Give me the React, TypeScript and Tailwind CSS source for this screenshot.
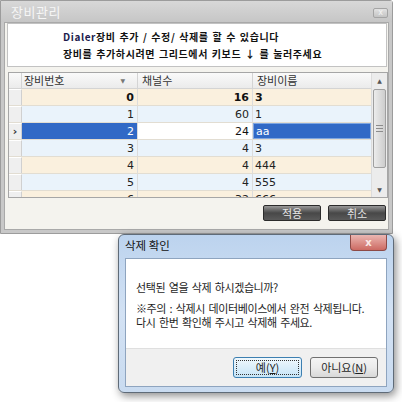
import React from "react";

type Row = { a: string; b: string; c: string; bold?: boolean; sel?: boolean };

const rows: Row[] = [
  { a: "0", b: "16", c: "3", bold: true },
  { a: "1", b: "60", c: "1" },
  { a: "2", b: "24", c: "aa", sel: true },
  { a: "3", b: "4", c: "3" },
  { a: "4", b: "4", c: "444" },
  { a: "5", b: "4", c: "555" },
  { a: "6", b: "32", c: "666" },
];

function DarkButton({ label }: { label: string }) {
  return (
    <div className="w-[58px] h-[16px] flex items-center justify-center rounded-[2px] border border-[#2b2b2b] bg-gradient-to-b from-[#9a9a9a] via-[#484848] to-[#5a5a5a] text-[11px] leading-none text-[#e6e6e6] font-['Noto_Sans_CJK_KR',sans-serif]">
      {label}
    </div>
  );
}

function MainWindow() {
  return (
    <div className="absolute left-0 top-0 w-[393px] h-[234px] flex flex-col border border-[#9c9c9c] bg-[#c8c8c8] rounded-tr-[3px]">
      {/* title bar */}
      <div className="h-[21px] flex items-center justify-between pl-[10px] pr-[4px] bg-gradient-to-b from-[#d8d8d8] to-[#c6c6c6]">
        <span className="text-[13px] leading-none text-[#f6f6f6] font-['Noto_Sans_CJK_KR',sans-serif] tracking-[0.5px]">
          장비관리
        </span>
        <div className="w-[15px] h-[10px] mt-[3px] flex items-center justify-center rounded-[2px] border border-[#a4a4a4] bg-gradient-to-b from-[#e2e2e2] to-[#c4c4c4] text-[8px] leading-none text-[#f4f4f4] font-['DejaVu_Sans',sans-serif]">
          x
        </div>
      </div>
      {/* content */}
      <div className="flex-1 mx-[3px] mb-[3px] bg-[#f4f3ee] border border-[#a9a9a9] flex flex-col">
        {/* header panel */}
        <div className="ml-[2px] mr-[1px] h-[44px] bg-white border border-[#c2c2c2] flex flex-col justify-center gap-[4px] pl-[55px] font-['Noto_Sans_CJK_KR',sans-serif] font-bold text-[10px] leading-[13px] tracking-[0.6px] [word-spacing:1px] text-[#111]">
          <div>
            <span className="text-[#1b1b4d]">Dialer</span>장비 추가 / 수정/ 삭제를 할 수 있습니다
          </div>
          <div>장비를 추가하시려면 그리드에서 키보드 ↓ 를 눌러주세요</div>
        </div>
        {/* grid */}
        <div className="mt-[5px] ml-[3px] h-[126px] border border-[#a6a6a6] bg-white flex font-['DejaVu_Sans','Noto_Sans_CJK_KR',sans-serif] text-[11px] leading-none">
          <div className="flex-1 flex flex-col overflow-hidden">
            <div className="h-[16px] shrink-0 flex border-b border-[#d4d4d4] bg-gradient-to-b from-[#fafafa] to-[#ebebeb] text-[#333]">
              <div className="w-[13px] border-r border-[#d4d4d4]" />
              <div className="w-[116px] border-r border-[#d4d4d4] flex items-center justify-between pl-[2px] pr-[12px]">
                <span className="font-['Noto_Sans_CJK_KR',sans-serif] text-[11px]">장비번호</span>
                <span className="text-[6px] text-[#777]">▼</span>
              </div>
              <div className="w-[115px] border-r border-[#d4d4d4] flex items-center pl-[4px]">
                <span className="font-['Noto_Sans_CJK_KR',sans-serif] text-[11px]">채널수</span>
              </div>
              <div className="flex-1 flex items-center pl-[4px]">
                <span className="font-['Noto_Sans_CJK_KR',sans-serif] text-[11px]">장비이름</span>
              </div>
            </div>
            {rows.map((r, i) => {
              const bg = i % 2 === 0 ? "bg-[#faf0de]" : "bg-[#eaf3fb]";
              const weight = r.bold ? "font-bold text-[#111]" : "text-[#222]";
              return (
                <div key={i} className={`h-[17px] shrink-0 flex border-b border-[#e2ddd2] ${weight}`}>
                  <div className="w-[13px] border-r border-[#d0d0d0] bg-[#efefef] border-t border-t-white flex items-center justify-center text-[#333]">
                    {r.sel ? <span className="text-[11px] font-bold">›</span> : null}
                  </div>
                  <div
                    className={`w-[116px] border-r border-[#dcdcdc] flex items-center justify-end pr-[3px] ${
                      r.sel ? "bg-[#3169c6] text-white" : bg
                    }`}
                  >
                    {r.a}
                  </div>
                  <div
                    className={`w-[115px] border-r border-[#dcdcdc] flex items-center justify-end pr-[3px] ${
                      r.sel ? "bg-white text-[#111]" : bg
                    }`}
                  >
                    {r.b}
                  </div>
                  <div
                    className={`flex-1 flex items-center pl-[2px] ${
                      r.sel ? "bg-[#3169c6] text-white border border-[#7fa6e0]" : bg
                    }`}
                  >
                    {r.c}
                  </div>
                </div>
              );
            })}
          </div>
          {/* scrollbar */}
          <div className="w-[16px] flex flex-col bg-[#ececec] border-l border-[#dcdcdc]">
            <div className="h-[16px] flex items-center justify-center text-[6px] text-[#555]">▲</div>
            <div className="flex-1 flex flex-col">
              <div className="h-[79px] mx-[1px] rounded-[2px] border border-[#9f9f9f] bg-gradient-to-r from-[#ececec] to-[#cdcdcd] flex items-center justify-center">
                <div className="flex flex-col gap-[2px]">
                  <div className="w-[7px] h-px bg-[#8c8c8c]" />
                  <div className="w-[7px] h-px bg-[#8c8c8c]" />
                  <div className="w-[7px] h-px bg-[#8c8c8c]" />
                </div>
              </div>
            </div>
            <div className="h-[14px] flex items-center justify-center text-[6px] text-[#555]">▼</div>
          </div>
        </div>
        {/* buttons */}
        <div className="mt-[7px] flex justify-end gap-[7px] pr-[2px]">
          <DarkButton label="적용" />
          <DarkButton label="취소" />
        </div>
      </div>
    </div>
  );
}

function Dialog() {
  return (
    <div className="absolute left-[118px] top-[234px] w-[276px] h-[159px] flex flex-col rounded-[6px] border border-[#5f6b78] bg-gradient-to-b from-[#bcd3ee] via-[#d3e2f4] to-[#c9dbf0] shadow-[2px_3px_8px_rgba(0,0,0,0.45)]">
      <div className="h-[23px] flex justify-between pl-[6px] pr-[6px]">
        <span className="pt-[2px] text-[11.5px] leading-[16px] text-[#111] font-['Noto_Sans_CJK_KR',sans-serif]">
          삭제 확인
        </span>
        <div className="w-[37px] h-[16px] rounded-b-[4px] border border-t-0 border-[#8d4a46] bg-gradient-to-b from-[#eab6b2] to-[#cc6a63] flex items-center justify-center text-[10px] leading-none text-[#fbe9e7] font-['DejaVu_Sans',sans-serif] font-bold">
          x
        </div>
      </div>
      <div className="mx-[6px] h-[129px] border border-[#8ea4bf] flex flex-col font-['Noto_Sans_CJK_KR',sans-serif] text-[11px] leading-[14px] tracking-[-0.4px] [word-spacing:1.5px] text-[#1e1e1e]">
        <div className="h-[89px] bg-white pl-[10px] pt-[21px]">
          <div>선택된 열을 삭제 하시겠습니까?</div>
          <div className="mt-[7px]">※주의 : 삭제시 데이터베이스에서 완전 삭제됩니다.</div>
          <div>다시 한번 확인해 주시고 삭제해 주세요.</div>
        </div>
        <div className="flex-1 bg-[#f0f0f0] border-t border-[#dfdfdf] flex items-center justify-end gap-[8px] pr-[8px] tracking-normal [word-spacing:0px]">
          <div className="w-[69px] h-[21px] rounded-[3px] border border-[#3c7fb1] bg-gradient-to-b from-[#f0f8fd] to-[#c6e4f7] p-[2px]">
            <div className="w-full h-full border border-dotted border-[#333] flex items-center justify-center text-[11px] leading-none">
              예(<span className="underline">Y</span>)
            </div>
          </div>
          <div className="w-[68px] h-[21px] rounded-[3px] border border-[#707070] bg-gradient-to-b from-[#f4f4f4] via-[#ebebeb] to-[#d8d8d8] flex items-center justify-center text-[11px] leading-none">
            아니요(<span className="underline">N</span>)
          </div>
        </div>
      </div>
    </div>
  );
}

export default function App() {
  return (
    <div className="relative w-[402px] h-[402px] bg-white overflow-hidden">
      <MainWindow />
      <Dialog />
    </div>
  );
}
